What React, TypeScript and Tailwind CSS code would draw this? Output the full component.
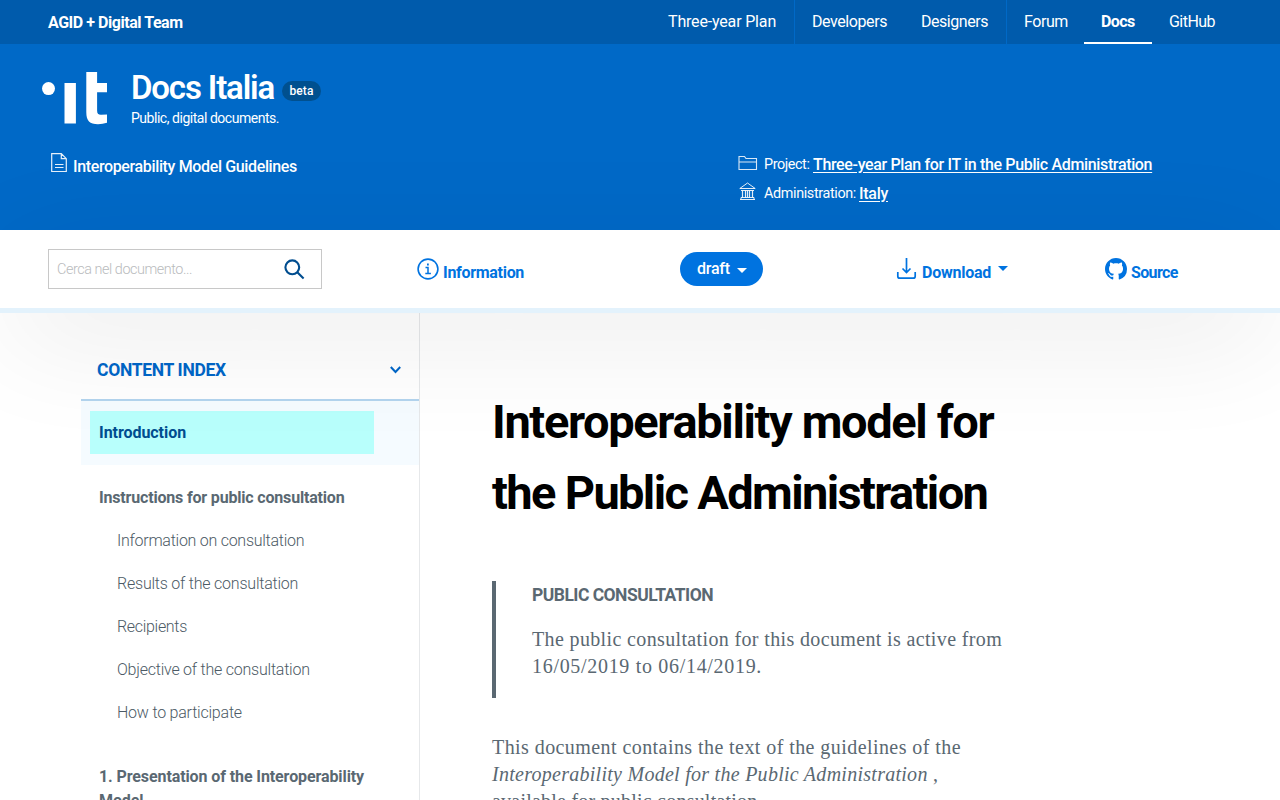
import type { ReactNode } from "react";

const topLinks = [
  { label: "Three-year Plan", cls: "w-[127px] border-r border-[#0069c7] pl-0 tracking-[-0.17px]" },
  { label: "Developers", cls: "w-[126px] pl-[17px] tracking-[-0.42px]" },
  { label: "Designers", cls: "w-[86px] border-r border-[#0069c7] tracking-[-0.46px]" },
  { label: "Forum", cls: "w-[77px] pl-[17px] tracking-[-0.42px]" },
  { label: "Docs", cls: "w-[68px] border-b-2 border-white pl-[17px] pt-0.5 font-bold tracking-[-0.6px]" },
  { label: "GitHub", cls: "pl-[17px] tracking-[-0.54px]" },
];

function TopBar() {
  return (
    <div className="flex h-11 items-center bg-[#005bac] pl-12 text-base text-white">
      <a className="w-[620px] pt-0.5 font-bold tracking-[-0.46px]">AGID + Digital Team</a>
      <nav className="flex h-full whitespace-nowrap">
        {topLinks.map((l) => (
          <a key={l.label} className={`box-border flex h-full items-center ${l.cls}`}>
            {l.label}
          </a>
        ))}
      </nav>
    </div>
  );
}

function Logo() {
  return (
    <svg className="h-[54px] w-[67px]" viewBox="0 0 67 54" fill="#fff">
      <circle cx="6.500" cy="16.600" r="6.500" />
      <path d="M22.500 11h11.400v40.500H22.500z" />
      <path d="M44.300 0h10.800v11H65v9.300h-9.900v18.200c0 3 1.200 4.400 4 4.300L65 42.400v8.400c-3 .9-5.600 1.400-9 1.400-8.300 0-11.700-3.500-11.700-12z" />
    </svg>
  );
}

function DocIcon() {
  return (
    <svg className="h-5 w-4" viewBox="0 0 16 20" fill="none" stroke="#fff" strokeOpacity=".9">
      <path d="M.7 .7h9.600L15.300 5.700v12.800H.7zM10.300 .7v5h5M4 11.500h8.500M4 14.500h8.500" strokeWidth="1.200" />
    </svg>
  );
}

function FolderIcon() {
  return (
    <svg className="h-4 w-5" viewBox="0 0 20 16" fill="none" stroke="#fff" strokeOpacity=".85">
      <path d="M1 14.500V1.500h5.500l1.500 2h10.500v11zM1 7h17.500" strokeWidth="1.100" />
    </svg>
  );
}

function BankIcon() {
  return (
    <svg className="h-[19px] w-5" viewBox="0 0 20 19" fill="none" stroke="#fff" strokeOpacity=".9">
      <path d="M1.800 6.500h15.400L9.500 1zM2 17.500h15M3 15.500h13v2M3 15.500v2M3 8.500h13" />
      <path d="M4.500 8.500v7M7.500 8.500v7M9.500 8.500v7M11.500 8.500v7M14.500 8.500v7" strokeWidth="1.200" />
    </svg>
  );
}

function Header() {
  return (
    <header className="h-[186px] bg-[#0069c7] text-white">
      <div className="flex pl-[42px] pt-7">
        <Logo />
        <div className="pl-[22px]">
          <div className="flex h-8 items-center">
            <span className="w-[151px] whitespace-nowrap text-[33px] font-semibold leading-8 tracking-[-1.15px]">
              Docs Italia
            </span>
            <span className="mt-[6px] flex h-5 w-[39px] items-center justify-center rounded-full bg-[#00508f] text-xs font-medium tracking-[0.1px]">
              beta
            </span>
          </div>
          <p className="mt-[5px] text-sm leading-[18px] tracking-[-0.47px]">Public, digital documents.</p>
        </div>
      </div>
      <div className="flex pl-[51px] pt-6">
        <div className="flex w-[687px] pt-0.5">
          <DocIcon />
          <span className="mt-1 pl-1.5 text-base font-medium leading-5 tracking-[-0.36px]">
            Interoperability Model Guidelines
          </span>
        </div>
        <div className="-mt-px">
          <p className="flex h-[29px] items-center whitespace-nowrap">
            <span className="mb-[3px] w-[26px]"><FolderIcon /></span>
            <span className="w-[49px] text-[14.4px] tracking-[-0.42px]">Project:</span>
            <a className="text-base font-medium tracking-[-0.35px] underline underline-offset-2">
              Three-year Plan for IT in the Public Administration
            </a>
          </p>
          <p className="flex h-[29px] items-center whitespace-nowrap pt-px">
            <span className="mb-[6px] w-[26px]"><BankIcon /></span>
            <span className="w-[95px] text-[14.4px] tracking-[-0.37px]">Administration:</span>
            <a className="text-base font-medium tracking-[-0.28px] underline underline-offset-2">Italy</a>
          </p>
        </div>
      </div>
    </header>
  );
}

function Toolbar() {
  return (
    <div className="relative z-10 flex h-[83px] border-b-[5px] border-[#e3f2fc] bg-white pl-12 pt-[19px] text-base font-bold text-[#0073e0] shadow-[0_25px_120px_-10px_rgba(0,0,0,0.11)]">
      <div className="flex h-10 w-[274px] items-center justify-between border border-[#c8c8c8] pl-2 pr-4">
        <span className="pt-0.5 text-[14.4px] font-light tracking-[-0.44px] text-[#b9bbbd]">Cerca nel documento...</span>
        <svg className="h-[22px] w-[22px]" viewBox="0 0 22 22" fill="none" stroke="#004d8f" strokeWidth="2.100">
          <circle cx="9.300" cy="9.300" r="6.900" />
          <path d="M14.300 14.300l6.300 6.300" />
        </svg>
      </div>
      <a className="ml-[95px] flex h-11 w-[263px] tracking-[-0.3px]">
        <svg className="mt-[9px] h-[22px] w-[22px]" viewBox="0 0 22 22" fill="none" stroke="#0073e0">
          <circle cx="11" cy="11" r="9.900" strokeWidth="1.600" />
          <path d="M8.500 9.500H11v5.700M8.300 15.400h5.600" strokeWidth="1.500" />
          <path d="M10 6.500h1.800" strokeWidth="1.800" />
        </svg>
        <span className="pl-1 pt-3">Information</span>
      </a>
      <button className="mt-[3px] flex h-[34px] w-[83px] items-center rounded-full bg-[#0073e0] pl-[17px] font-medium tracking-[-0.25px] text-white">
        <span className="w-10 text-left">draft</span>
        <svg className="mt-0.5 h-[5px] w-[10px]" viewBox="0 0 10 5" fill="#fff"><path d="M0 0h10L5 5z" /></svg>
      </button>
      <a className="ml-[133px] flex h-11 w-[209px] tracking-[-0.25px]">
        <svg className="mt-[9px] h-[22px] w-[21px]" viewBox="0 0 21 22" fill="none" stroke="#0073e0" strokeWidth="1.700">
          <path d="M10.500 0v14M6.500 10.500l4 4 4-4M1.800 14v4.200c0 1.300.7 2 2 2h13.400c1.300 0 2-.7 2-2V14" />
        </svg>
        <span className="w-[81px] pl-[5px] pt-3">Download</span>
        <svg className="mt-[17px] h-[5px] w-[10px]" viewBox="0 0 10 5" fill="#0073e0"><path d="M0 0h10L5 5z" /></svg>
      </a>
      <a className="flex h-11 tracking-[-0.65px]">
        <svg className="mt-[9px] h-[22px] w-[22px]" viewBox="0 0 16 16" fill="#0073e0">
          <path d="M8 0C3.580 0 0 3.580 0 8c0 3.540 2.290 6.530 5.470 7.590.4.070.55-.17.55-.38 0-.19-.010-.82-.010-1.490-2.010.37-2.530-.49-2.690-.94-.090-.23-.48-.94-.82-1.130-.28-.15-.68-.52-.010-.53.63-.010 1.080.58 1.230.82.72 1.210 1.870.87 2.330.66.070-.52.28-.87.510-1.070-1.780-.2-3.640-.89-3.640-3.950 0-.87.31-1.590.82-2.150-.080-.2-.36-1.020.080-2.120 0 0 .67-.21 2.200.82.64-.18 1.320-.27 2-.27s1.360.09 2 .27c1.530-1.040 2.200-.82 2.200-.82.44 1.100.16 1.920.080 2.120.510.56.82 1.270.82 2.150 0 3.070-1.870 3.750-3.650 3.950.29.25.54.73.54 1.480 0 1.070-.010 1.930-.010 2.200 0 .21.15.46.55.38A8.010 8.010 0 0 0 16 8c0-4.420-3.580-8-8-8z" />
        </svg>
        <span className="pl-1 pt-3">Source</span>
      </a>
    </div>
  );
}

const subItems = [
  { label: "Information on consultation", cls: "tracking-[-0.26px]" },
  { label: "Results of the consultation", cls: "tracking-[-0.22px]" },
  { label: "Recipients", cls: "tracking-[-0.31px]" },
  { label: "Objective of the consultation", cls: "tracking-[-0.23px]" },
  { label: "How to participate", cls: "tracking-[-0.22px]" },
];

function Sidebar() {
  return (
    <aside className="h-full w-[420px] shrink-0 border-r border-[#e6e8ea] pl-[81px] text-base text-[#5a6872]">
      <div className="flex h-[88px] items-center justify-between border-b-2 border-[#b3d4ee] pl-4 pr-[18px] pt-7 text-[#0066c8]">
        <h2 className="text-[17.5px] font-bold tracking-[-0.32px]">CONTENT INDEX</h2>
        <svg className="mb-px h-2 w-[11px]" viewBox="0 0 11 8" fill="none" stroke="currentColor" strokeWidth="2">
          <path d="M.8 1l4.700 5 4.700-5" />
        </svg>
      </div>
      <div className="h-16 bg-[#f5fbff] pl-[9px] pt-2.5">
        <a className="flex h-[43px] w-[284px] items-center bg-[#b8fffc] pl-[9px] font-bold tracking-[-0.05px] text-[#004d8f]">
          Introduction
        </a>
      </div>
      <nav className="whitespace-nowrap pl-[18px] pt-[11px]">
        <a className="flex h-[43px] items-center font-bold tracking-[-0.18px]">Instructions for public consultation</a>
        {subItems.map((s) => (
          <a key={s.label} className={`flex h-[43px] items-center pl-[18px] font-light text-[#4c5a65] ${s.cls}`}>
            {s.label}
          </a>
        ))}
        <a className="mt-[31px] block font-bold leading-6 tracking-[-0.1px]">
          1. Presentation of the Interoperability
          <br />
          Model
        </a>
      </nav>
    </aside>
  );
}

function Line({ cls, children }: { cls: string; children: ReactNode }) {
  return <span className={`block whitespace-nowrap ${cls}`}>{children}</span>;
}

function Article() {
  return (
    <main className="pl-[72px] pt-[73px] font-['Liberation_Serif',serif] text-xl leading-[27px] text-[#5a6872]">
      <h1 className="font-[Roboto,sans-serif] text-[47px] font-bold leading-[71px] text-black">
        <Line cls="tracking-[-1.36px]">Interoperability model for</Line>
        <Line cls="tracking-[-1.64px]">the Public Administration</Line>
      </h1>
      <blockquote className="mt-[53px] h-[117px] border-l-4 border-[#5a6872] pl-9">
        <h3 className="mb-[17px] font-[Roboto,sans-serif] text-[17.5px] font-bold leading-[28px] tracking-[-0.53px]">
          PUBLIC CONSULTATION
        </h3>
        <p>
          <Line cls="tracking-[0.36px]">The public consultation for this document is active from</Line>
          <Line cls="tracking-[0.69px]">16/05/2019 to 06/14/2019.</Line>
        </p>
      </blockquote>
      <p className="mt-9">
        <Line cls="tracking-[0.43px]">This document contains the text of the guidelines of the</Line>
        <Line cls="tracking-[0.27px]">
          <em>Interoperability Model for the Public Administration</em> ,
        </Line>
        <Line cls="tracking-[0.22px]">available for public consultation.</Line>
      </p>
    </main>
  );
}

export default function App() {
  return (
    <div className="flex h-[800px] w-[1280px] flex-col overflow-hidden bg-white font-[Roboto,sans-serif]">
      <TopBar />
      <Header />
      <Toolbar />
      <div className="flex h-[487px]">
        <Sidebar />
        <Article />
      </div>
    </div>
  );
}
